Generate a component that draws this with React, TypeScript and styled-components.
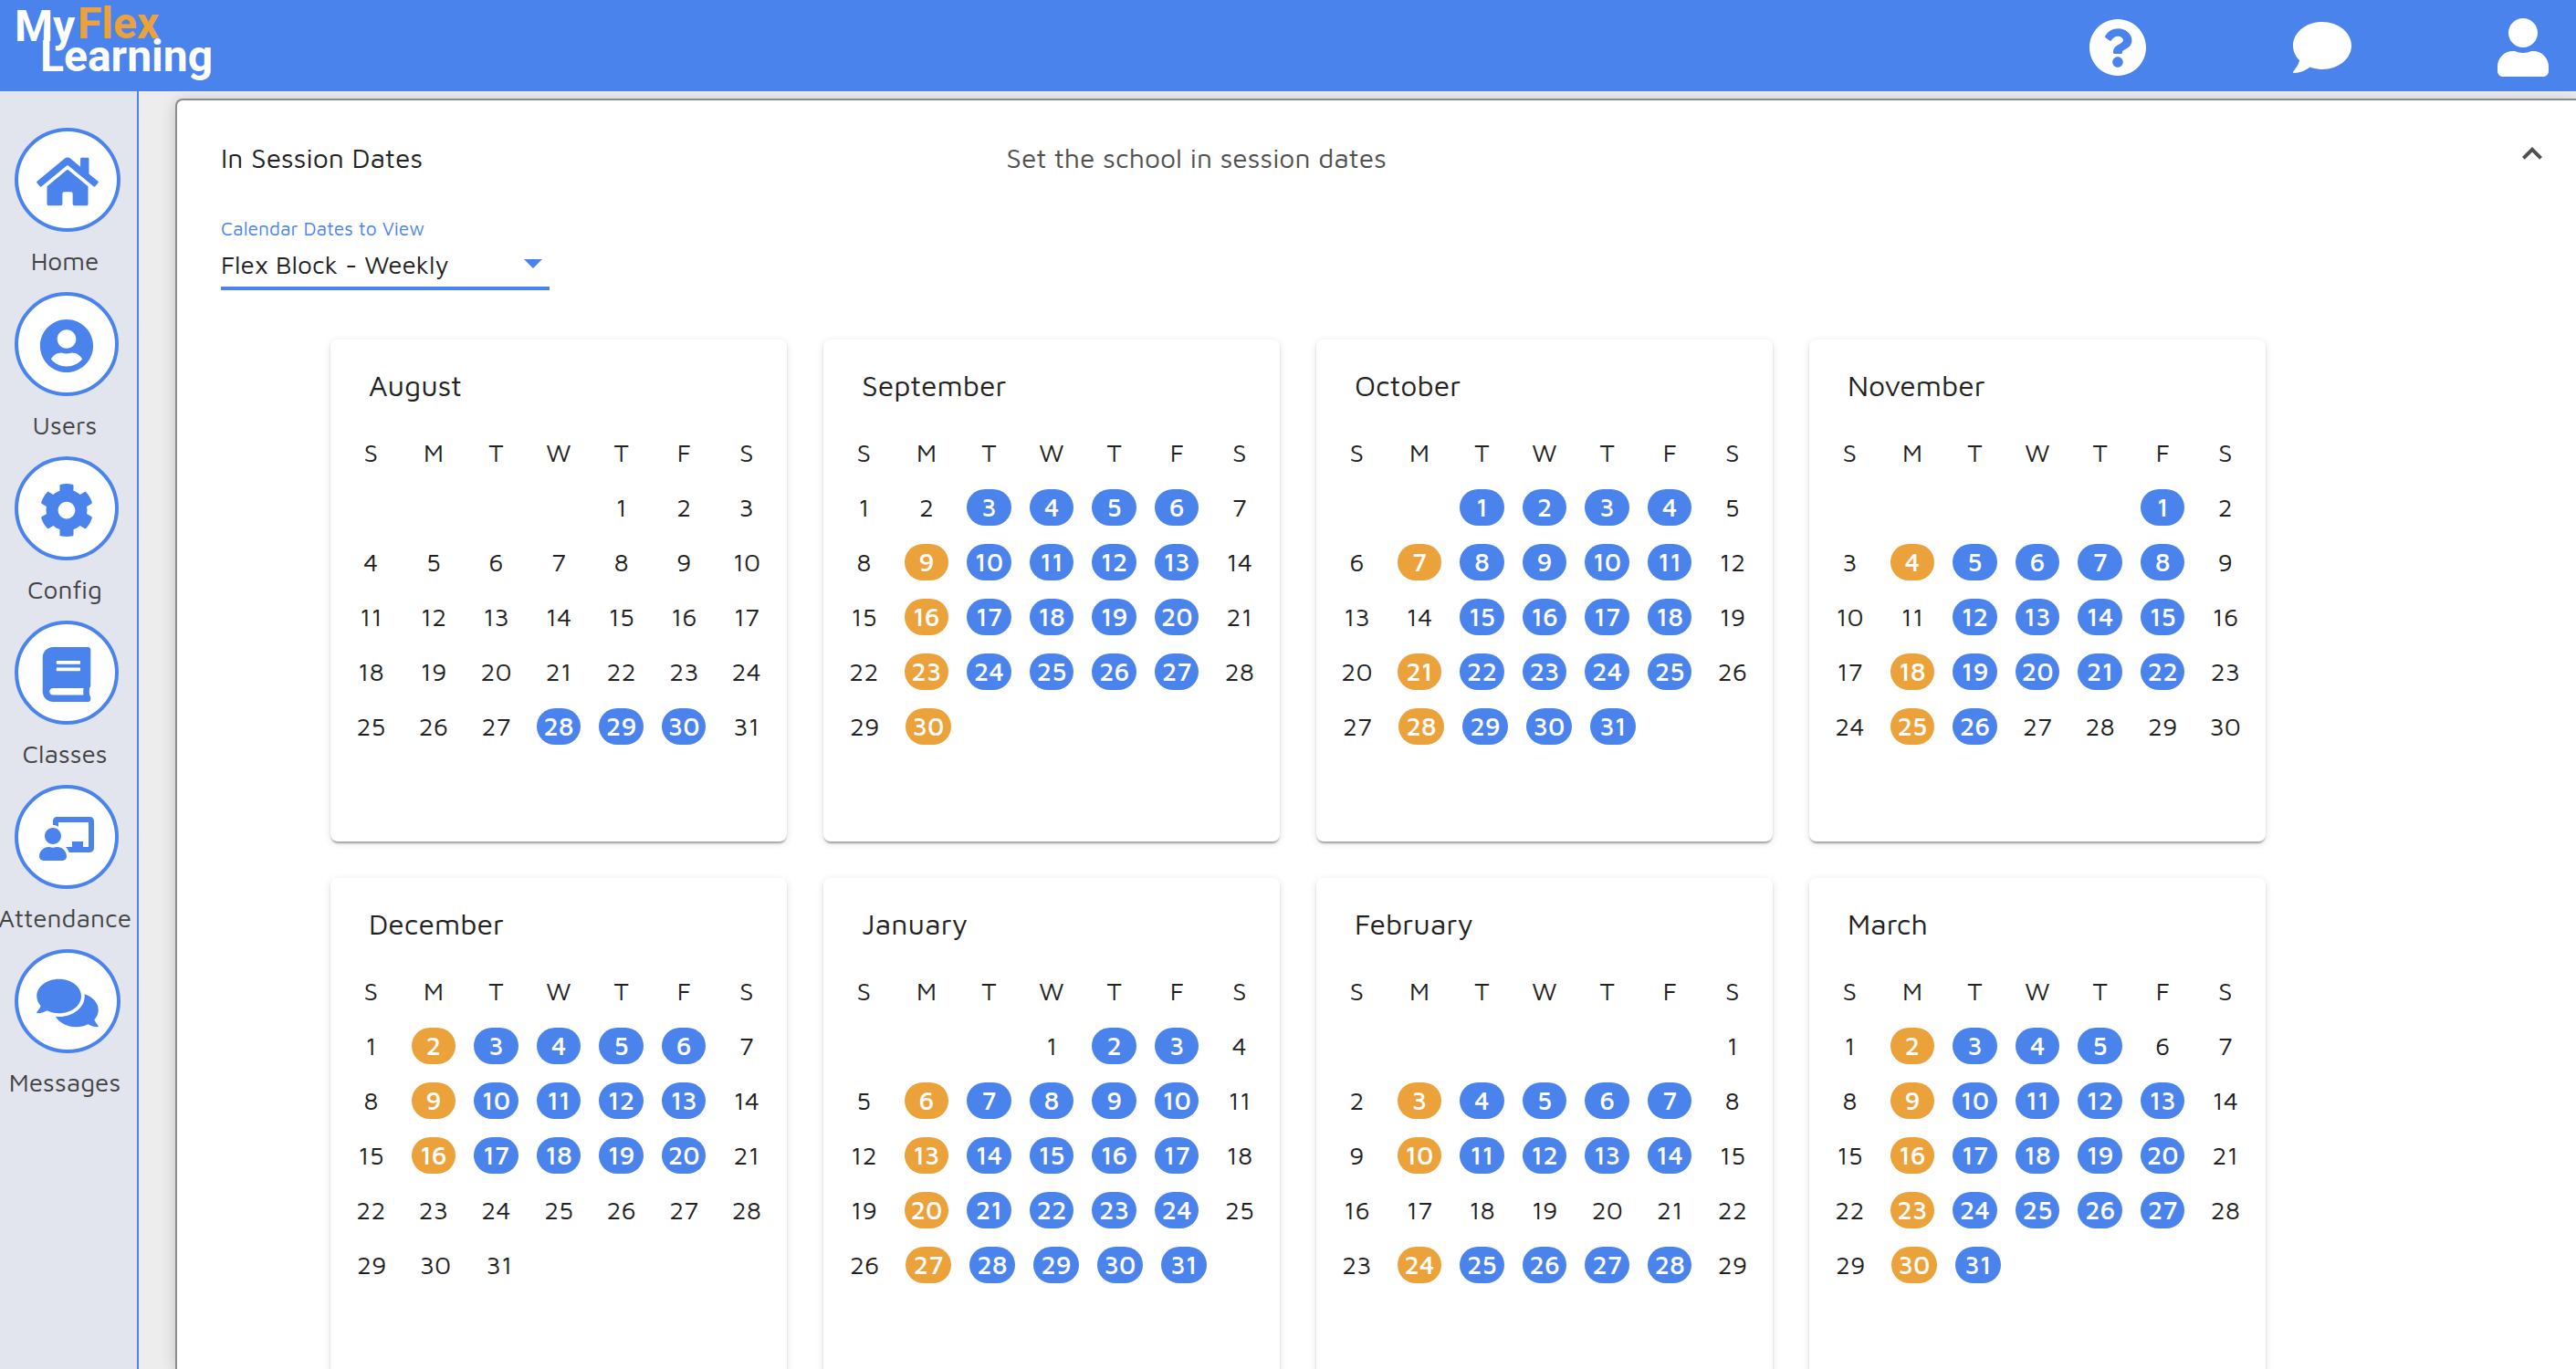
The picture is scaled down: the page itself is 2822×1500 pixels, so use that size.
import React from "react";
import styled, { createGlobalStyle } from "styled-components";
import {
  FaBook,
  FaChalkboardTeacher,
  FaCog,
  FaComment,
  FaComments,
  FaHome,
  FaQuestionCircle,
  FaUser,
  FaUserCircle,
} from "react-icons/fa";

const blue = "#4b83ec";
const orange = "#eba23b";
const ink = "#212121";

const GlobalStyle = createGlobalStyle`
  *, *::before, *::after { box-sizing: border-box; }
  body {
    margin: 0;
    color: ${ink};
    background: #ededed;
    font-family: "Maven Pro", Inter, "Noto Sans", sans-serif;
    font-size: 28px;
  }
`;

const Page = styled.div`
  display: flex;
  flex-direction: column;
  height: 100vh;
  overflow: hidden;
`;

const TopBar = styled.header`
  display: flex;
  flex: none;
  justify-content: space-between;
  height: 100px;
  padding-right: 30px;
  background: ${blue};
`;

const LogoLink = styled.a`
  display: block;
`;

const LogoArt = styled.svg`
  display: block;
  overflow: visible;
  font-family: Roboto, sans-serif;
  font-size: 48px;
  font-weight: 700;
`;

const Actions = styled.div`
  display: flex;
  align-items: center;
  gap: 160px;
  padding-top: 4px;
`;

const IconButton = styled.button<{ $width: number }>`
  display: flex;
  padding: 0;
  border: 0;
  color: #fff;
  background: none;
  cursor: pointer;

  svg {
    width: ${(p) => p.$width}px;
    height: 64px;
  }
`;

const Body = styled.div`
  display: flex;
  flex: 1;
  min-height: 0;
`;

const Sidebar = styled.nav`
  display: flex;
  flex: none;
  flex-direction: column;
  gap: 18px;
  width: 152px;
  padding: 40px 8px 0 0;
  border-right: 2px solid ${blue};
  background: #e2e4ee;
`;

const NavItem = styled.a`
  display: flex;
  flex-direction: column;
  align-items: center;
  gap: 16px;
  color: #424242;
  line-height: 32px;
  text-decoration: none;
  white-space: nowrap;
`;

const NavCircle = styled.span<{ $wide?: boolean }>`
  display: flex;
  align-items: center;
  align-self: flex-start;
  justify-content: center;
  width: ${(p) => (p.$wide ? 116 : 114)}px;
  height: 114px;
  margin-left: 16px;
  padding-top: 4px;
  border: 4px solid ${blue};
  border-radius: 50%;
  color: ${blue};
  background: #fff;

  svg {
    width: ${(p) => (p.$wide ? 68 : 60)}px;
    height: 60px;
  }
`;

const Main = styled.main`
  display: flex;
  flex: 1;
  min-width: 0;
  padding: 8px 0 0 40px;
  overflow: hidden;
`;

const Panel = styled.section`
  flex: 1;
  min-width: 0;
  padding: 43px 0 0 48px;
  border: 2px solid #8b8b8b;
  border-right: 0;
  border-bottom: 0;
  border-top-left-radius: 8px;
  background: #fff;
  box-shadow: 0 2px 16px rgba(0, 0, 0, 0.18);
`;

const PanelHeader = styled.div`
  display: grid;
  grid-template-columns: 1fr 2fr auto;
  column-gap: 60px;
  padding-right: 37px;
  font-size: 30px;
  line-height: 40px;
`;

const PanelTitle = styled.h1`
  margin: 0;
  font-size: 30px;
  font-weight: 400;
`;

const PanelNote = styled.p`
  margin: 0;
  color: #505050;
`;

const CollapseButton = styled.button`
  display: flex;
  align-items: center;
  align-self: start;
  height: 30px;
  padding: 0;
  border: 0;
  background: none;
  cursor: pointer;
`;

const Field = styled.div`
  display: flex;
  flex-direction: column;
  width: 360px;
  margin-top: 43px;
`;

const FieldLabel = styled.label`
  color: ${blue};
  font-size: 21px;
  line-height: 28px;
`;

const SelectWrap = styled.div`
  position: relative;

  svg {
    position: absolute;
    top: 20px;
    right: 8px;
    pointer-events: none;
  }
`;

const Select = styled.select`
  display: block;
  width: 100%;
  height: 54px;
  padding: 0;
  border: 0;
  border-bottom: 4px solid ${blue};
  border-radius: 0;
  color: ${ink};
  background: none;
  font: inherit;
  appearance: none;
`;

const Months = styled.div`
  display: flex;
  flex-wrap: wrap;
  gap: 40px;
  margin-top: 54px;
  padding-left: 120px;
`;

const Card = styled.article`
  width: 500px;
  min-height: 550px;
  padding: 30px 10px;
  border-radius: 8px;
  background: #fff;
  box-shadow:
    0 4px 2px -2px rgba(0, 0, 0, 0.2),
    0 2px 2px rgba(0, 0, 0, 0.14),
    0 2px 8px rgba(0, 0, 0, 0.12);
`;

const MonthName = styled.h2`
  margin: 0 0 24px;
  padding-left: 32px;
  font-size: 32px;
  font-weight: 400;
  line-height: 40px;
`;

const Calendar = styled.table`
  display: block;
  font-size: 28px;
  line-height: 40px;

  thead,
  tbody {
    display: block;
  }
`;

const Week = styled.tr`
  display: flex;
`;

const DayName = styled.th`
  flex: 0 1 70px;
  min-width: 0;
  padding: 10px;
  font-weight: 400;
  text-align: center;
`;

const DayCell = styled.td`
  flex: 0 1 70px;
  min-width: 0;
  height: 60px;
  padding: 10px;
  text-align: center;
`;

const Pill = styled.span<{ $color: string }>`
  display: block;
  border-radius: 20px;
  color: #fff;
  background: ${(p) => p.$color};
  font-weight: 500;
`;

type Month = {
  name: string;
  start: number;
  days: number;
  blue: number[];
  orange: number[];
};

const range = (from: number, to: number) =>
  Array.from({ length: to - from + 1 }, (_, i) => from + i);

const months: Month[] = [
  { name: "August", start: 4, days: 31, blue: range(28, 30), orange: [] },
  {
    name: "September",
    start: 0,
    days: 30,
    blue: [...range(3, 6), ...range(10, 13), ...range(17, 20), ...range(24, 27)],
    orange: [9, 16, 23, 30],
  },
  {
    name: "October",
    start: 2,
    days: 31,
    blue: [...range(1, 4), ...range(8, 11), ...range(15, 18), ...range(22, 25), ...range(29, 31)],
    orange: [7, 21, 28],
  },
  {
    name: "November",
    start: 5,
    days: 30,
    blue: [1, ...range(5, 8), ...range(12, 15), ...range(19, 22), 26],
    orange: [4, 18, 25],
  },
  {
    name: "December",
    start: 0,
    days: 31,
    blue: [...range(3, 6), ...range(10, 13), ...range(17, 20)],
    orange: [2, 9, 16],
  },
  {
    name: "January",
    start: 3,
    days: 31,
    blue: [2, 3, ...range(7, 10), ...range(14, 17), ...range(21, 24), ...range(28, 31)],
    orange: [6, 13, 20, 27],
  },
  {
    name: "February",
    start: 6,
    days: 29,
    blue: [...range(4, 7), ...range(11, 14), ...range(25, 28)],
    orange: [3, 10, 24],
  },
  {
    name: "March",
    start: 0,
    days: 31,
    blue: [...range(3, 5), ...range(10, 13), ...range(17, 20), ...range(24, 27), 31],
    orange: [2, 9, 16, 23, 30],
  },
];

const dayNames = ["S", "M", "T", "W", "T", "F", "S"];

const navItems = [
  { label: "Home", icon: <FaHome />, wide: true },
  { label: "Users", icon: <FaUserCircle /> },
  { label: "Config", icon: <FaCog /> },
  { label: "Classes", icon: <FaBook /> },
  { label: "Attendance", icon: <FaChalkboardTeacher /> },
  { label: "Messages", icon: <FaComments />, wide: true },
];

function toWeeks({ start, days }: Month): (number | null)[][] {
  const cells = [...Array<null>(start).fill(null), ...range(1, days)];
  const weeks: (number | null)[][] = [];
  for (let i = 0; i < cells.length; i += 7) weeks.push(cells.slice(i, i + 7));
  return weeks;
}

function Day({ day, month }: { day: number | null; month: Month }) {
  if (day === null) return <DayCell />;
  if (month.blue.includes(day)) return <DayCell><Pill $color={blue}>{day}</Pill></DayCell>;
  if (month.orange.includes(day)) return <DayCell><Pill $color={orange}>{day}</Pill></DayCell>;
  return <DayCell>{day}</DayCell>;
}

function MonthCard({ month }: { month: Month }) {
  return (
    <Card>
      <MonthName>{month.name}</MonthName>
      <Calendar>
        <thead>
          <Week>
            {dayNames.map((name, i) => (
              <DayName key={i} scope="col">{name}</DayName>
            ))}
          </Week>
        </thead>
        <tbody>
          {toWeeks(month).map((week, i) => (
            <Week key={i}>
              {week.map((day, j) => (
                <Day key={j} day={day} month={month} />
              ))}
            </Week>
          ))}
        </tbody>
      </Calendar>
    </Card>
  );
}

function Logo() {
  return (
    <LogoArt width="240" height="100" viewBox="0 0 240 100">
      <text x="16" y="45" fill="#fff">My</text>
      <text x="85" y="42" fill={orange}>Flex</text>
      <text x="44" y="78" fill="#fff">Learning</text>
    </LogoArt>
  );
}

export default function App() {
  return (
    <>
      <GlobalStyle />
      <Page>
        <TopBar>
          <LogoLink href="#home">
            <Logo />
          </LogoLink>
          <Actions>
            <IconButton $width={64} aria-label="Help"><FaQuestionCircle /></IconButton>
            <IconButton $width={64} aria-label="Chat"><FaComment /></IconButton>
            <IconButton $width={56} aria-label="Account"><FaUser /></IconButton>
          </Actions>
        </TopBar>
        <Body>
          <Sidebar>
            {navItems.map((item) => (
              <NavItem key={item.label} href={`#${item.label.toLowerCase()}`}>
                <NavCircle $wide={item.wide}>{item.icon}</NavCircle>
                {item.label}
              </NavItem>
            ))}
          </Sidebar>
          <Main>
            <Panel>
              <PanelHeader>
                <PanelTitle>In Session Dates</PanelTitle>
                <PanelNote>Set the school in session dates</PanelNote>
                <CollapseButton aria-label="Collapse">
                  <svg width="22" height="14" viewBox="0 0 22 14" fill="none" stroke="#505050" strokeWidth="4">
                    <path d="M1.4 12.4 11 2.8l9.6 9.6" />
                  </svg>
                </CollapseButton>
              </PanelHeader>
              <Field>
                <FieldLabel htmlFor="calendar">Calendar Dates to View</FieldLabel>
                <SelectWrap>
                  <Select id="calendar" defaultValue="weekly">
                    <option value="weekly">Flex Block - Weekly</option>
                  </Select>
                  <svg width="20" height="10" viewBox="0 0 20 10">
                    <path d="M0 0h20L10 10z" fill={blue} />
                  </svg>
                </SelectWrap>
              </Field>
              <Months>
                {months.map((month) => (
                  <MonthCard key={month.name} month={month} />
                ))}
              </Months>
            </Panel>
          </Main>
        </Body>
      </Page>
    </>
  );
}
